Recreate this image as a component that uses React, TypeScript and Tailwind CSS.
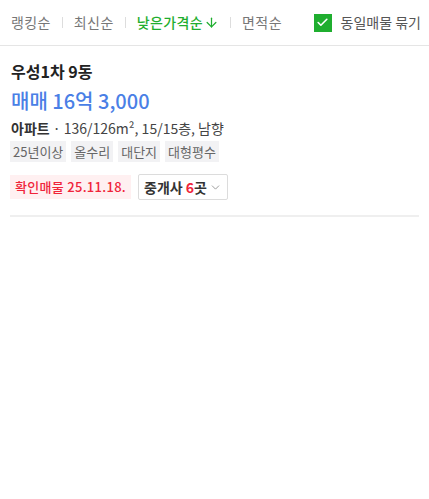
import { Check, ChevronDown, ArrowDown } from "lucide-react";

const SORTS = ["랭킹순", "최신순", "낮은가격순", "면적순"];
const TAGS = ["25년이상", "올수리", "대단지", "대형평수"];

export default function App() {
  return (
    <div
      className="w-[429px] h-[499px] bg-white text-[#222]"
      style={{ fontFamily: '"Noto Sans CJK KR", "Noto Sans", sans-serif' }}
    >
      <div className="h-[46px] flex items-center justify-between pl-[11px] pr-[8px] border-b border-[#e5e5e5]">
        <ul className="flex items-center text-[14px] tracking-[0.4px]">
          {SORTS.map((s, i) => {
            const active = s === "낮은가격순";
            return (
              <li key={s} className="flex items-center">
                {i > 0 && <span className="w-px h-[11px] bg-[#dddddd] mx-[11px]" />}
                <span className={active ? "flex items-center text-[#1fae2f] font-medium" : "text-[#777]"}>
                  {s}
                  {active && <ArrowDown size={15} strokeWidth={2} className="ml-[1px]" />}
                </span>
              </li>
            );
          })}
        </ul>
        <label className="flex items-center gap-[9px] text-[14px] text-[#555]">
          <span className="w-[18px] h-[18px] bg-[#1fae2f] flex items-center justify-center">
            <Check size={13} strokeWidth={3} className="text-white" />
          </span>
          동일매물 묶기
        </label>
      </div>

      <div className="mx-[10px] pt-[14px] pb-[15px] border-b-2 border-[#efefef]">
        <div className="px-px text-[16px] font-bold leading-[22px]">우성1차 9동</div>
        <div className="px-px mt-[6px] text-[20px] font-medium leading-[26px] text-[#4a7fe6]">매매 16억 3,000</div>
        <div className="px-px mt-[4px] text-[14px] leading-[20px] text-[#444]">
          <span className="font-bold text-[#333]">아파트</span> · 136/126m², 15/15층, 남향
        </div>
        <div className="flex gap-[5px] mt-[3px]">
          {TAGS.map((t) => (
            <span key={t} className="px-[3px] h-[21px] leading-[21px] text-[13px] bg-[#f2f2f4] text-[#666]">
              {t}
            </span>
          ))}
        </div>
        <div className="flex items-center gap-[7px] mt-[12px]">
          <span className="h-[24px] leading-[24px] px-[5px] text-[13px] font-medium bg-[#fff0f1] text-[#f0253a] tracking-[0.3px]">
            확인매물 25.11.18.
          </span>
          <button className="h-[26px] flex items-center px-[5px] border border-[#dcdcdc] rounded-[2px] text-[14px] font-bold text-[#333]">
            중개사 <span className="ml-[3px] text-[#f0253a]">6</span>곳
            <ChevronDown size={13} strokeWidth={1.5} className="ml-[2px] text-[#888]" />
          </button>
        </div>
      </div>
    </div>
  );
}
